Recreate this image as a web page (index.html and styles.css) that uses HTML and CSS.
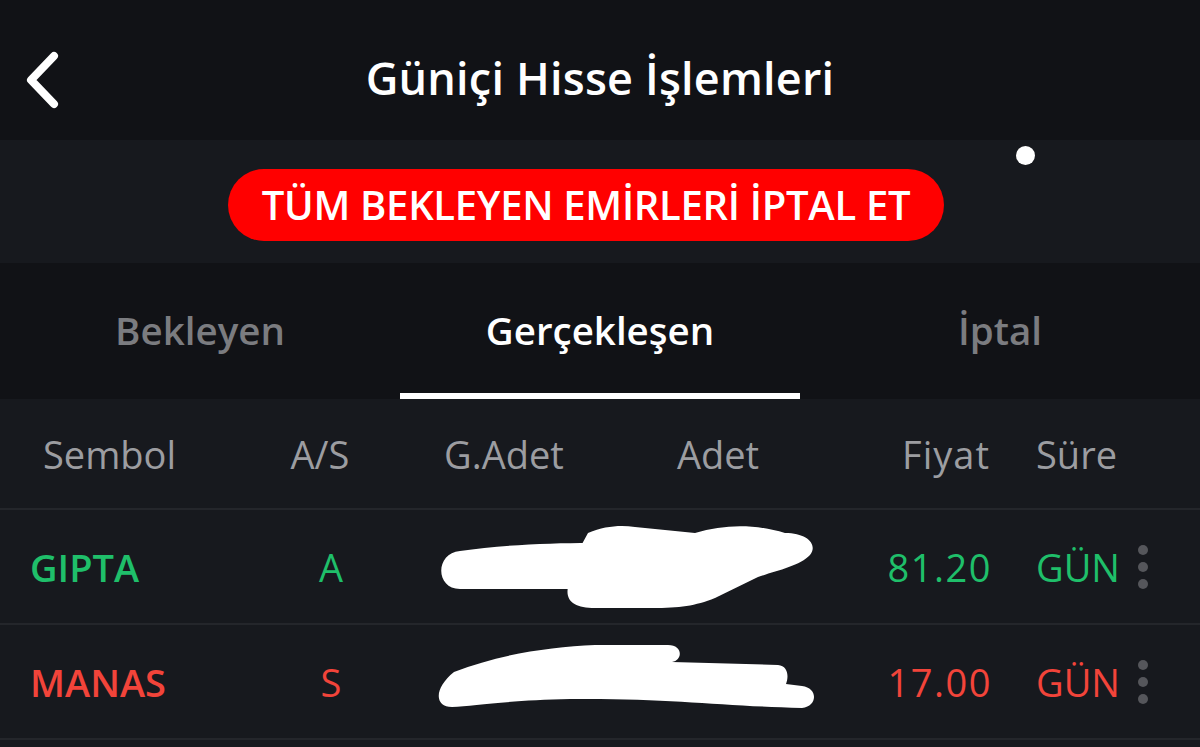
FILE: index.html
```html
<!doctype html>
<html lang="tr">
<head>
	<meta charset="UTF-8">
	<title>Güniçi Hisse İşlemleri</title>
	<link rel="stylesheet" href="styles.css">
</head>
<body>
	<div class="app">
		<header class="topbar">
			<a class="back" href="#">
				<svg width="40" height="60" viewBox="0 0 40 60"><path d="M31 6 L8 30 L31 54" fill="none" stroke="#fff" stroke-width="8" stroke-linecap="round" stroke-linejoin="round"/></svg>
			</a>
			<h1>Güniçi Hisse İşlemleri</h1>
		</header>
		<div class="band">
			<span class="touch"></span>
			<button class="cancel-all">TÜM BEKLEYEN EMİRLERİ İPTAL ET</button>
		</div>
		<nav class="tabs">
			<a href="#">Bekleyen</a>
			<a href="#" class="active">Gerçekleşen</a>
			<a href="#">İptal</a>
		</nav>
		<div class="grid head">
			<span class="c-sym">Sembol</span>
			<span class="c-as">A/S</span>
			<span class="c-gadet">G.Adet</span>
			<span class="c-adet">Adet</span>
			<span class="c-price">Fiyat</span>
			<span class="c-dur">Süre</span>
			<span></span>
		</div>
		<div class="grid row buy">
			<span class="c-sym">GIPTA</span>
			<span class="c-as">A</span>
			<svg class="c-hide" width="428" height="112" viewBox="0 0 428 112">
				<path d="M70 40 C110 34 160 32 200 32 L205 74 C205 78 200 78 195 78 L70 78 C45 78 45 42 70 40 Z" fill="#fff"/>
				<path d="M198 22 C215 15 230 14 245 16 L305 22 C335 13 365 13 395 22 C418 22 428 34 420 44 C410 55 385 60 368 66 L325 87 C305 95 290 97 262 97 L205 97 C185 97 175 90 178 76 L180 55 Z" fill="#fff"/>
			</svg>
			<span class="c-price">81.20</span>
			<span class="c-dur">GÜN</span>
			<span class="more"><i></i><i></i><i></i></span>
		</div>
		<div class="grid row sell">
			<span class="c-sym">MANAS</span>
			<span class="c-as">S</span>
			<svg class="c-hide" width="428" height="112" viewBox="0 0 428 112">
				<path d="M64 46 C110 28 160 21 205 19 L278 19 C293 19 293 34 282 36 L388 39 C398 40 399 50 396 58 L412 60 C428 62 428 80 412 82 C330 80 280 72 180 73 C120 74 85 80 62 81 C44 81 44 62 64 46 Z" fill="#fff"/>
			</svg>
			<span class="c-price">17.00</span>
			<span class="c-dur">GÜN</span>
			<span class="more"><i></i><i></i><i></i></span>
		</div>
	</div>
</body>
</html>
```
FILE: styles.css
```css
* { box-sizing: border-box; }
body { margin: 0; background: #17191e; font-family: "Open Sans", Lato, "Noto Sans", sans-serif; }
.app { width: 1200px; height: 747px; overflow: hidden; background: #17191e; }

.topbar { position: relative; height: 140px; display: flex; align-items: center; justify-content: center; padding-top: 14px; background: #111216; }
.back { position: absolute; left: 23px; top: 50px; }
.topbar h1 { margin: 0; color: #fff; font-size: 45px; font-weight: 600; letter-spacing: 0.2px; }

.band { position: relative; height: 123px; display: flex; align-items: center; justify-content: center; padding: 6px 28px 0 0; background: #17191e; }
.touch { position: absolute; left: 1016px; top: 6px; width: 19px; height: 19px; border-radius: 50%; background: #fff; }
.cancel-all { width: 716px; height: 72px; border: 0; border-radius: 36px; background: #ff0000; color: #fff; font-family: inherit; font-size: 40px; font-weight: 600; letter-spacing: -0.3px; padding: 0; }

.tabs { height: 136px; display: flex; background: #111216; }
.tabs a { flex: 1; display: flex; align-items: center; justify-content: center; padding-top: 4px; color: #7b7c80; text-decoration: none; font-size: 38.5px; font-weight: 600; border-bottom: 6px solid transparent; }
.tabs a.active { color: #fff; border-bottom-color: #fff; }

.grid { display: grid; grid-template-columns: 250px 140px 228px 200px 182px 130px 1fr; align-items: center; border-bottom: 2px solid #24262b; }
.head { height: 111px; color: #9c9da1; font-size: 38px; font-weight: 400; }
.row { height: 115px; font-size: 38px; }
.c-sym { padding-left: 43px; }
.c-as { text-align: center; }
.c-gadet, .c-adet { text-align: center; }
.c-price { text-align: right; padding-right: 10px; letter-spacing: 1px; }
.c-dur { padding-left: 36px; }
.row .c-sym { padding-left: 30px; font-weight: 600; }
.row .c-price { letter-spacing: 1.5px; padding-right: 8px; }
.row .c-as { padding-left: 22px; }
.c-hide { grid-column: 3 / 5; display: block; }
.buy { color: #1fbf6a; }
.sell { color: #f2443a; }
.more { display: flex; flex-direction: column; gap: 7px; padding-left: 8px; }
.more i { width: 10px; height: 10px; border-radius: 50%; background: #55565b; }
```
